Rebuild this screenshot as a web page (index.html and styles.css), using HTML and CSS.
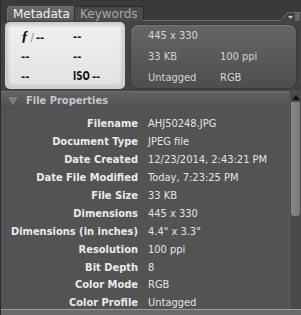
FILE: index.html
```html
<!DOCTYPE html>
<html lang="en">
<head>
  <meta charset="UTF-8">
  <title>Metadata</title>
  <link rel="stylesheet" href="styles.css">
</head>
<body>
  <div class="panel">
    <div class="tabs">
      <div class="tab active">Metadata</div>
      <div class="tab">Keywords</div>
      <div class="tab-fill"></div>
      <div class="menu">
        <svg width="14" height="9" viewBox="0 0 14 9">
          <path d="M1 3h5l-2.5 3z" fill="#c8c8c8"/>
          <path d="M8 1h5M8 3h5M8 5h5M8 7h5" stroke="#8a8a8a" stroke-width="1"/>
        </svg>
      </div>
    </div>

    <div class="summary">
      <div class="camera">
        <div class="cam-cell"><span class="fnum">ƒ</span><span class="slash">/</span>--</div>
        <div class="cam-cell">--</div>
        <div class="cam-cell">--</div>
        <div class="cam-cell">--</div>
        <div class="cam-cell">--</div>
        <div class="cam-cell"><span class="iso">ISO</span>--</div>
      </div>
      <div class="info">
        <div class="info-cell wide">445 x 330</div>
        <div class="info-cell">33 KB</div>
        <div class="info-cell">100 ppi</div>
        <div class="info-cell">Untagged</div>
        <div class="info-cell">RGB</div>
      </div>
    </div>

    <div class="body">
      <div class="list">
        <div class="section-head">
          <span class="twisty"></span>File Properties
        </div>
        <div class="rows" id="rows"></div>
      </div>
      <div class="scrollbar">
        <div class="arrow"></div>
        <div class="thumb"></div>
      </div>
    </div>
    <div class="next-head"></div>
  </div>

  <script>
    const props = [
      ['Filename', 'AHJ50248.JPG'],
      ['Document Type', 'JPEG file'],
      ['Date Created', '12/23/2014, 2:43:21 PM'],
      ['Date File Modified', 'Today, 7:23:25 PM'],
      ['File Size', '33 KB'],
      ['Dimensions', '445 x 330'],
      ['Dimensions (in inches)', '4.4" x 3.3"'],
      ['Resolution', '100 ppi'],
      ['Bit Depth', '8'],
      ['Color Mode', 'RGB'],
      ['Color Profile', 'Untagged']
    ];

    const rows = document.getElementById('rows');
    props.forEach(([label, value]) => {
      const row = document.createElement('div');
      row.className = 'row';
      row.innerHTML = `<span class="label">${label}</span><span class="value">${value}</span>`;
      rows.appendChild(row);
    });
  </script>
</body>
</html>
```

FILE: styles.css
```css
body {
  margin: 0;
  background: #535353;
  font-family: Tahoma, 'DejaVu Sans Condensed', 'DejaVu Sans', sans-serif;
  font-size: 11px;
  overflow: hidden;
}

.panel {
  width: 301px;
  height: 315px;
  display: flex;
  flex-direction: column;
  background: #535353;
  border-left: 1px solid #2c2c2c;
  box-sizing: border-box;
}

.tabs {
  height: 21px;
  flex-shrink: 0;
  display: flex;
  align-items: flex-end;
  background: #3a3a3a;
  padding-left: 6px;
  box-sizing: border-box;
}

.tab {
  height: 14px;
  line-height: 14px;
  padding: 0 5px;
  font-family: 'DejaVu Sans', sans-serif;
  font-size: 12px;
  color: #a8a8a8;
  background: #4a4a4a;
  border: 1px solid #2a2a2a;
  border-bottom: none;
  border-radius: 3px 3px 0 0;
  margin-right: -1px;
}

.tab.active {
  color: #f0f0f0;
  background: linear-gradient(#6a6a6a, #575757);
  border-color: #6e6e6e;
  width: 56px;
  padding: 0 5px;
}

.tab-fill {
  flex: 1;
  height: 1px;
  background: #6a6a6a;
}

.menu {
  width: 20px;
  height: 8px;
  border-left: 1px solid #6a6a6a;
  border-top: 1px solid #6a6a6a;
  transform: skewX(-40deg);
  transform-origin: bottom left;
  display: flex;
  justify-content: center;
  background: #424242;
}

.menu svg {
  transform: skewX(40deg);
}

.summary {
  height: 70px;
  flex-shrink: 0;
  display: flex;
  gap: 5px;
  padding: 1px 4px 0 4px;
  background: #444444;
  box-sizing: border-box;
}

.camera {
  width: 120px;
  height: 67px;
  box-sizing: border-box;
  background: linear-gradient(#f0f0f0, #e2e2e2);
  border: 2px solid #d0d0d0;
  border-radius: 5px;
  box-shadow: inset 0 0 4px rgba(0, 0, 0, 0.25);
  display: grid;
  grid-template-columns: 52px 1fr;
  grid-template-rows: repeat(3, 1fr);
  padding: 3px 4px 1px 14px;
  color: #111;
  font-family: 'DejaVu Sans', sans-serif;
  font-size: 10px;
  font-weight: bold;
  align-items: center;
}

.fnum {
  font-family: 'Liberation Serif', serif;
  font-style: italic;
  font-size: 15px;
  margin-right: 2px;
}

.slash {
  color: #888;
  font-weight: normal;
  margin-right: 2px;
}

.iso {
  display: inline-block;
  font-family: 'DejaVu Sans Condensed', 'DejaVu Sans', sans-serif;
  font-size: 12px;
  transform: scaleX(0.8);
  transform-origin: left center;
  margin-right: -2px;
}

.info {
  flex: 1;
  height: 65px;
  margin-top: 2px;
  box-sizing: border-box;
  background: linear-gradient(#656565, #4e4e4e);
  border: 1px solid #3a3a3a;
  border-radius: 8px;
  box-shadow: inset 0 1px 0 #777;
  display: grid;
  grid-template-columns: 72px 1fr;
  grid-template-rows: repeat(3, 1fr);
  padding: 0 0 0 17px;
  align-items: center;
  color: #d4d4d4;
  font-family: 'DejaVu Sans Condensed', 'DejaVu Sans', sans-serif;
  font-size: 11px;
}

.info-cell.wide {
  grid-column: span 2;
}

.body {
  flex: 1;
  display: flex;
  min-height: 0;
}

.list {
  flex: 1;
}

.section-head {
  height: 17px;
  background: linear-gradient(#626262, #4f4f4f);
  border-top: 1px solid #6e6e6e;
  color: #c2c7d0;
  font-family: 'DejaVu Sans Condensed', 'DejaVu Sans', sans-serif;
  font-weight: bold;
  font-size: 11px;
  display: flex;
  align-items: center;
  padding-left: 7px;
  gap: 8px;
}

.twisty {
  width: 0;
  height: 0;
  border-left: 5px solid transparent;
  border-right: 5px solid transparent;
  border-top: 8px solid #7c7c7c;
}

.rows {
  padding-top: 6px;
}

.row {
  display: grid;
  grid-template-columns: 137px 1fr;
  gap: 10px;
  height: 17.9px;
  align-items: center;
  font-family: 'DejaVu Sans Condensed', 'DejaVu Sans', sans-serif;
  white-space: nowrap;
}

.label {
  text-align: right;
  font-weight: bold;
  color: #eaeaea;
}

.value {
  color: #e4e4e4;
}

.scrollbar {
  width: 11px;
  margin-top: 1px;
  background: #4a4a4a;
  border-left: 1px solid #5c5c5c;
  display: flex;
  flex-direction: column;
  align-items: center;
}

.arrow {
  width: 0;
  height: 0;
  margin: 3px 0 2px;
  border-left: 4px solid transparent;
  border-right: 4px solid transparent;
  border-bottom: 5px solid #111;
}

.thumb {
  width: 9px;
  height: 114px;
  background: linear-gradient(to right, #888, #7a7a7a);
  border-radius: 0 0 3px 3px;
}

.next-head {
  height: 5px;
  flex-shrink: 0;
  background: #6a6a6a;
  border-top: 1px solid #9a9a9a;
}
```
